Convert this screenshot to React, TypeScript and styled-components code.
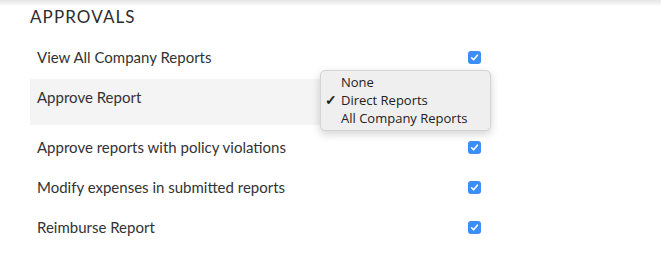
import React from 'react'
import styled, { createGlobalStyle } from 'styled-components'

const GlobalStyle = createGlobalStyle`
  body {
    margin: 0;
    background: #ffffff;
    font-family: Lato, 'Open Sans', sans-serif;
    color: #333333;
  }
`

const TopBar = styled.div`
  height: 6px;
  background: linear-gradient(to bottom, #e6e6e6, #f6f6f6 70%, #ffffff);
`

const Section = styled.section`
  padding: 2px 0 0 30px;
  width: 460px;
`

const Heading = styled.h2`
  margin: 0 0 13px;
  font-size: 17px;
  font-weight: 400;
  line-height: 18px;
  letter-spacing: 1.1px;
  color: #2d2d2d;
`

const Row = styled.div<{ $active?: boolean }>`
  position: relative;
  display: flex;
  align-items: flex-start;
  justify-content: space-between;
  height: ${(p) => (p.$active ? '46px' : '40px')};
  margin-bottom: ${(p) => (p.$active ? '4px' : '0')};
  padding: 8px 9px 0 7px;
  box-sizing: border-box;
  background: ${(p) => (p.$active ? '#f4f4f4' : 'transparent')};
`

const Label = styled.span`
  font-size: 15px;
  line-height: 20px;
  color: #333333;
`

const Check = styled.span`
  display: inline-flex;
  align-items: center;
  justify-content: center;
  width: 13px;
  height: 13px;
  margin-top: 4px;
  border-radius: 3px;
  background: #3a8ef6;
`

const Menu = styled.ul`
  position: absolute;
  left: 290px;
  top: -9px;
  width: 171px;
  height: 61px;
  margin: 0;
  padding: 2px 0 0;
  box-sizing: border-box;
  list-style: none;
  background: #efefef;
  border: 1px solid #d4d4d4;
  border-radius: 5px;
  box-shadow: 0 3px 8px rgba(0, 0, 0, 0.18);
  font-family: 'Open Sans', Lato, sans-serif;
`

const MenuItem = styled.li`
  position: relative;
  padding-left: 20px;
  font-size: 13px;
  line-height: 18px;
  color: #222222;
`

const Tick = styled.span`
  position: absolute;
  left: 4px;
  top: 0;
  font-size: 14px;
  font-weight: 600;
`

const CheckMark = () => (
  <svg width="9" height="9" viewBox="0 0 9 9">
    <path d="M1.6 4.8 L3.6 6.8 L7.4 2.2" fill="none" stroke="#fff" strokeWidth="1.6" strokeLinecap="round" strokeLinejoin="round" />
  </svg>
)

const options = ['None', 'Direct Reports', 'All Company Reports']

const permissions = [
  { label: 'View All Company Reports' },
  { label: 'Approve Report', select: true },
  { label: 'Approve reports with policy violations' },
  { label: 'Modify expenses in submitted reports' },
  { label: 'Reimburse Report' },
]

export default function App() {
  return (
    <>
      <GlobalStyle />
      <TopBar />
      <Section>
        <Heading>APPROVALS</Heading>
        {permissions.map((p) => (
          <Row key={p.label} $active={p.select}>
            <Label>{p.label}</Label>
            {p.select ? (
              <Menu>
                {options.map((o) => (
                  <MenuItem key={o}>
                    {o === 'Direct Reports' && <Tick>✓</Tick>}
                    {o}
                  </MenuItem>
                ))}
              </Menu>
            ) : (
              <Check>
                <CheckMark />
              </Check>
            )}
          </Row>
        ))}
      </Section>
    </>
  )
}
